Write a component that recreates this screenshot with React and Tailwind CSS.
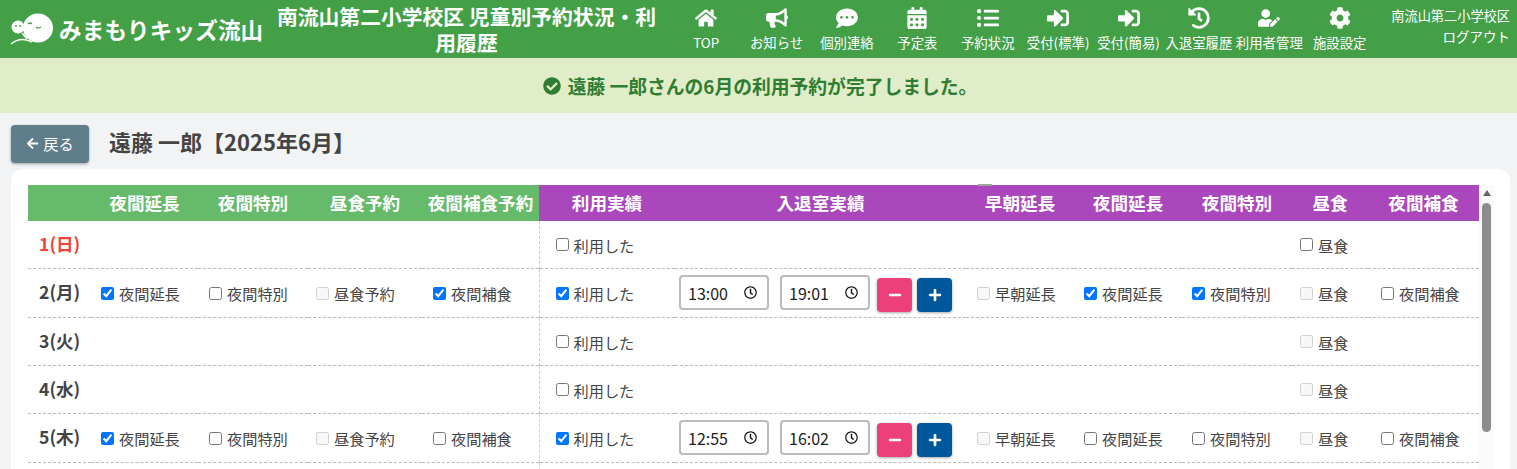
import {
  FaHome, FaBullhorn, FaCommentDots, FaCalendarAlt, FaListUl, FaSignInAlt, FaHistory,
  FaUserEdit, FaCog, FaCheckCircle, FaArrowLeft, FaMinus, FaPlus, FaRegClock,
} from "react-icons/fa";

const navItems = [
  { label: "TOP", icon: FaHome },
  { label: "お知らせ", icon: FaBullhorn },
  { label: "個別連絡", icon: FaCommentDots },
  { label: "予定表", icon: FaCalendarAlt },
  { label: "予約状況", icon: FaListUl },
  { label: "受付(標準)", icon: FaSignInAlt },
  { label: "受付(簡易)", icon: FaSignInAlt },
  { label: "入退室履歴", icon: FaHistory },
  { label: "利用者管理", icon: FaUserEdit },
  { label: "施設設定", icon: FaCog },
];

// n = unchecked, c = checked, d = disabled, null = empty cell
const rows = [
  { day: "1(日)", red: true, h: "h-[47px]", used: "n", meal: "n" },
  {
    day: "2(月)", h: "h-[49px]", res: ["c", "n", "d", "c"], used: "c", times: ["13:00", "19:01"],
    early: "d", night: "c", special: "c", meal: "d", snack: "n",
  },
  { day: "3(火)", h: "h-[48px]", used: "n", meal: "d" },
  { day: "4(水)", h: "h-[48px]", used: "n", meal: "d" },
  {
    day: "5(木)", h: "h-[49px]", res: ["c", "n", "d", "n"], used: "c", times: ["12:55", "16:02"],
    early: "d", night: "n", special: "n", meal: "d", snack: "n",
  },
  { day: "", h: "h-[48px]" },
];

const resCols = [
  { label: "夜間延長", pad: "pl-[10px]" },
  { label: "夜間特別", pad: "pl-[11px]" },
  { label: "昼食予約", pad: "pl-[8px]" },
  { label: "夜間補食", pad: "pl-[11px]" },
];

function Check({ state, label }) {
  if (!state) return null;
  return (
    <label className="inline-flex items-center gap-[5px] whitespace-nowrap text-[15.2px] leading-[22px] text-[#444]">
      <input
        type="checkbox"
        className="m-0 h-[13px] w-[13px]"
        checked={state === "c"}
        disabled={state === "d"}
        readOnly
      />
      {label}
    </label>
  );
}

function TimeBox({ value }) {
  return (
    <div className="flex h-[35px] w-[90px] items-center justify-between rounded-[4px] border-2 border-[#bbb] bg-white pl-[7px] pr-[10px] text-[16px] text-[#222]">
      {value}
      <FaRegClock className="h-[13px] w-[13px] text-[#111]" />
    </div>
  );
}

function Logo() {
  return (
    <div className="flex w-[270px] shrink-0 items-center pl-[10px]">
      <svg width="45" height="36" viewBox="0 0 45 36" className="shrink-0">
        <ellipse cx="28" cy="17" rx="15" ry="14.5" fill="#fff" />
        <circle cx="8" cy="16" r="6.5" fill="#fff" />
        <path d="M1 33 C8 27 16 28 22 31" stroke="#fff" strokeWidth="1.5" fill="none" />
        <path d="M12 22 L17 28" stroke="#fff" strokeWidth="1.5" />
        <circle cx="6" cy="15" r="1" fill="#43a047" />
        <circle cx="10" cy="15" r="1" fill="#43a047" />
        <path d="M18 13 q2 -2 4 0 M26 16 q2 2 5 0" stroke="#43a047" strokeWidth="1.2" fill="none" />
      </svg>
      <span className="ml-[4px] whitespace-nowrap text-[22.5px] font-bold leading-none tracking-[0.2px] text-white">
        みまもりキッズ流山
      </span>
    </div>
  );
}

export default function App() {
  return (
    <div
      className="h-screen overflow-hidden bg-[#f1f3f5] text-[#444]"
      style={{ fontFamily: '"Noto Sans CJK JP", "Noto Sans", sans-serif' }}
    >
      <header className="flex h-[58px] items-center bg-[#43a047] text-white shadow-[0_1px_3px_rgba(0,0,0,0.2)]">
        <Logo />
        <h1 className="w-[391px] shrink-0 pl-[2px] text-center text-[20.8px] font-bold leading-[26px]">
          南流山第二小学校区 児童別予約状況・利用履歴
        </h1>
        <nav className="ml-[10px] flex shrink-0">
          {navItems.map((item) => (
            <a key={item.label} className="flex w-[70.4px] flex-col items-center whitespace-nowrap">
              <item.icon className="h-[22px] w-[22px]" />
              <span className="mt-[4px] text-[13.4px] leading-[18px]">{item.label}</span>
            </a>
          ))}
        </nav>
        <div className="mb-[6px] flex flex-1 flex-col items-end pr-[7px] text-[13.2px] leading-[18px]">
          <span className="whitespace-nowrap">南流山第二小学校区</span>
          <span className="mt-[2px] text-[13.5px]">ログアウト</span>
        </div>
      </header>

      <div className="flex h-[55px] items-center justify-center gap-[7px] bg-[#e1edc8] pl-[3px] pt-[1px] text-[18.8px] font-bold text-[#2e7d32]">
        <FaCheckCircle className="h-[18px] w-[18px]" />
        遠藤 一郎さんの6月の利用予約が完了しました。
      </div>

      <div className="flex h-[56px] items-start px-[11px] pt-[12px]">
        <button className="flex h-[38px] w-[78px] items-center justify-center gap-[4px] rounded-[4px] bg-[#607d8b] pb-[2px] text-[15.2px] text-white shadow-[0_1px_3px_rgba(0,0,0,0.35)]">
          <FaArrowLeft className="h-[13px] w-[13px]" />
          戻る
        </button>
        <h2 className="ml-[20px] text-[22px] font-bold leading-[33px] text-[#444]">遠藤 一郎【2025年6月】</h2>
      </div>

      <div className="mx-[11px] flex h-[400px] w-[1499px] rounded-t-[12px] bg-white pt-[16px] pl-[17px]">
        <div className="relative w-[1451px] shrink-0">
          <div className="absolute left-[950px] top-[-1px] h-[2px] w-[14px] bg-[#9aa89a]" />
          <table className="w-[1451px] table-fixed border-collapse">
            <colgroup>
              <col className="w-[63px]" />
              <col className="w-[107px]" />
              <col className="w-[110px]" />
              <col className="w-[114px]" />
              <col className="w-[117px]" />
              <col className="w-[136px]" />
              <col className="w-[291px]" />
              <col className="w-[108px]" />
              <col className="w-[108px]" />
              <col className="w-[110px]" />
              <col className="w-[76px]" />
              <col className="w-[111px]" />
            </colgroup>
            <thead>
              <tr className="h-[36px] text-center text-[17.6px] font-bold text-white">
                <th className="bg-[#66bb6a]" />
                {["夜間延長", "夜間特別", "昼食予約", "夜間補食予約"].map((t) => (
                  <th key={t} className="whitespace-nowrap bg-[#66bb6a] font-bold">{t}</th>
                ))}
                {["利用実績", "入退室実績", "早朝延長", "夜間延長", "夜間特別", "昼食", "夜間補食"].map((t) => (
                  <th key={t} className="whitespace-nowrap bg-[#ab47bc] font-bold">{t}</th>
                ))}
              </tr>
            </thead>
            <tbody>
              {rows.map((r) => (
                <tr key={r.day} className={`${r.h} border-b border-dashed border-[#bbb]`}>
                  <td className={`pl-[11px] text-[17.6px] font-bold ${r.red ? "text-[#f44336]" : "text-[#444]"}`}>
                    {r.day}
                  </td>
                  {resCols.map((col, i) => (
                    <td key={col.label} className={col.pad}>
                      <Check state={r.res && r.res[i]} label={col.label} />
                    </td>
                  ))}
                  <td className="border-l border-dashed border-[#ccc] pl-[16px]">
                    <Check state={r.used} label="利用した" />
                  </td>
                  <td>
                    {r.times && (
                      <div className="flex items-center pl-[4px]">
                        <TimeBox value={r.times[0]} />
                        <div className="ml-[11px]"><TimeBox value={r.times[1]} /></div>
                        <button className="ml-[7px] mt-[5px] flex h-[34px] w-[35px] items-center justify-center rounded-[4px] bg-[#ec407a] text-white shadow-[0_1px_3px_rgba(0,0,0,0.35)]">
                          <FaMinus className="h-[14px] w-[14px]" />
                        </button>
                        <button className="ml-[5px] mt-[5px] flex h-[34px] w-[35px] items-center justify-center rounded-[4px] bg-[#01579b] text-white shadow-[0_1px_3px_rgba(0,0,0,0.35)]">
                          <FaPlus className="h-[14px] w-[14px]" />
                        </button>
                      </div>
                    )}
                  </td>
                  <td className="pl-[11px]"><Check state={r.early} label="早朝延長" /></td>
                  <td className="pl-[10px]"><Check state={r.night} label="夜間延長" /></td>
                  <td className="pl-[10px]"><Check state={r.special} label="夜間特別" /></td>
                  <td className="pl-[8px]"><Check state={r.meal} label="昼食" /></td>
                  <td className="pl-[13px]"><Check state={r.snack} label="夜間補食" /></td>
                </tr>
              ))}
            </tbody>
          </table>
        </div>
        {/* scrollbar */}
        <div className="flex h-full w-[15px] shrink-0 flex-col items-center bg-[#fafafa] pt-[5px]">
          <div className="h-0 w-0 border-x-[4px] border-b-[6px] border-x-transparent border-b-[#666]" />
          <div className="mt-[7px] h-[229px] w-[9px] rounded-full bg-[#8c8c8c]" />
        </div>
      </div>
    </div>
  );
}
